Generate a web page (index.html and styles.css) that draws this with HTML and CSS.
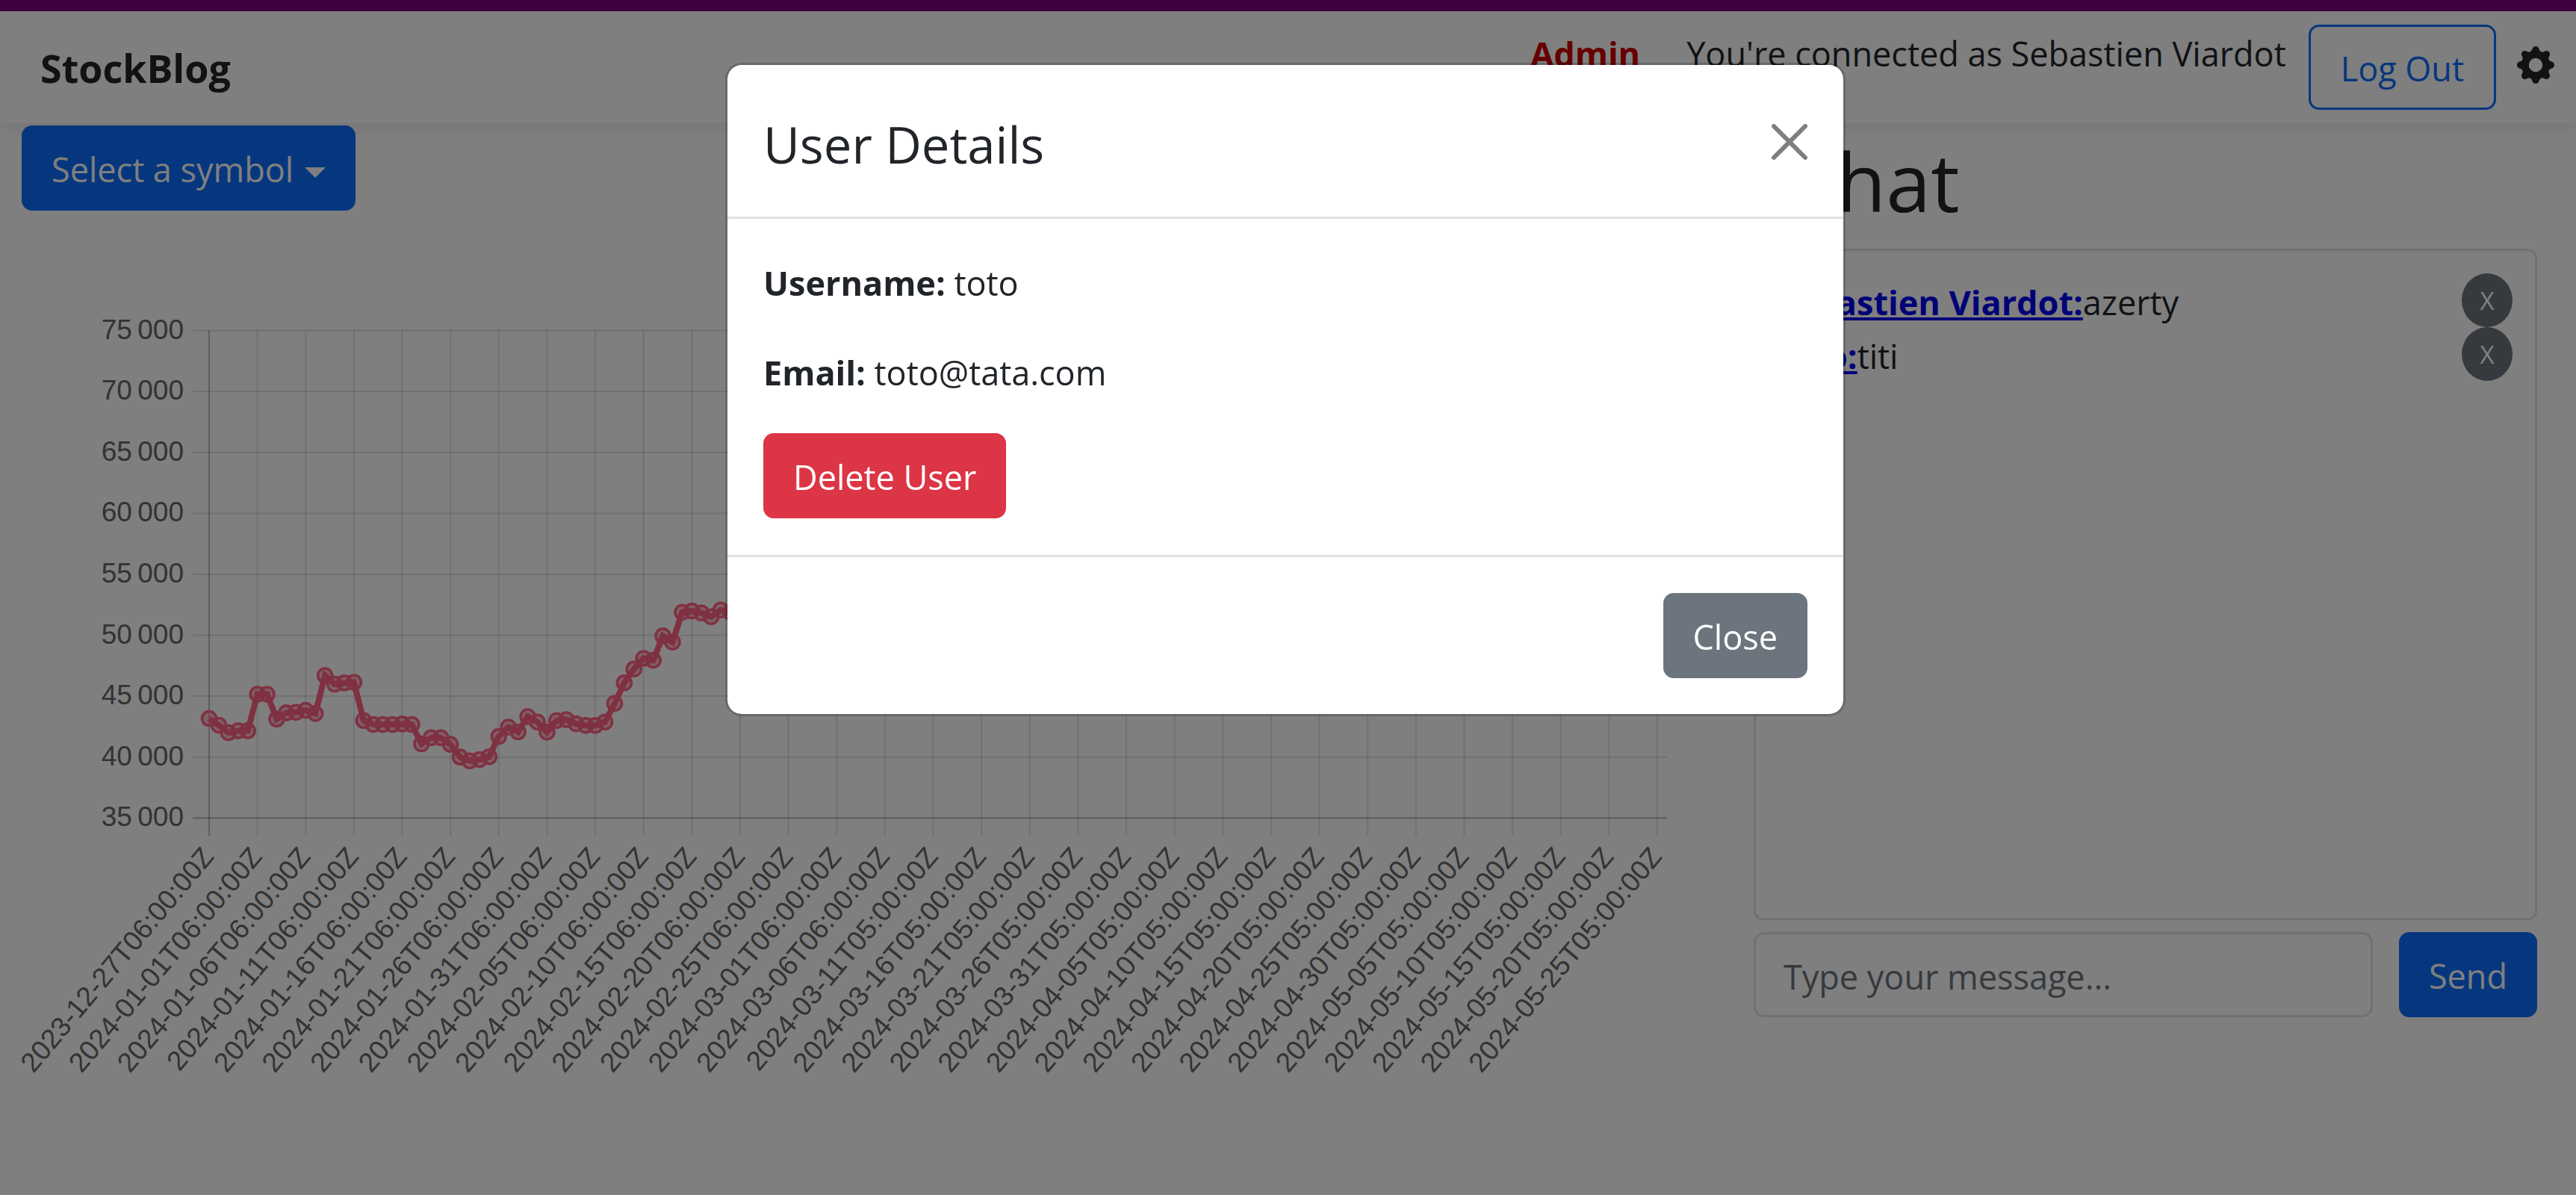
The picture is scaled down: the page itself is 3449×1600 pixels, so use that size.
FILE: index.html
```html
<!DOCTYPE html>
<html>
<head>
    <meta charset="utf-8">
    <title>StockBlog</title>
    <link rel="stylesheet" href="styles.css">
</head>
<body>
  <div class="top-strip"></div>
  <nav class="navbar">
    <a class="brand" href="#">StockBlog</a>
    <div class="nav-right">
      <a class="admin-link" href="#">Admin</a>
      <span class="connected">You're connected as Sebastien Viardot</span>
      <button class="btn btn-outline" type="button">Log Out</button>
      <svg class="gear" viewBox="0 0 16 16" aria-hidden="true">
        <path fill-rule="evenodd" d="M9.405 1.05c-.413-1.4-2.397-1.4-2.81 0l-.1.34a1.464 1.464 0 0 1-2.105.872l-.31-.17c-1.283-.698-2.686.705-1.987 1.987l.169.311c.446.82.023 1.841-.872 2.105l-.34.1c-1.4.413-1.4 2.397 0 2.81l.34.1a1.464 1.464 0 0 1 .872 2.105l-.17.31c-.698 1.283.705 2.686 1.987 1.987l.311-.169a1.464 1.464 0 0 1 2.105.872l.1.34c.413 1.4 2.397 1.4 2.81 0l.1-.34a1.464 1.464 0 0 1 2.105-.872l.31.17c1.283.698 2.686-.705 1.987-1.987l-.169-.311a1.464 1.464 0 0 1 .872-2.105l.34-.1c1.4-.413 1.4-2.397 0-2.81l-.34-.1a1.464 1.464 0 0 1-.872-2.105l.17-.31c.698-1.283-.705-2.686-1.987-1.987l-.311.169a1.464 1.464 0 0 1-2.105-.872l-.1-.34zM8 10.93a2.929 2.929 0 1 1 0-5.86 2.929 2.929 0 0 1 0 5.858z"/>
      </svg>
    </div>
  </nav>

  <main class="page">
    <section class="left-col">
      <button class="btn btn-primary dropdown-toggle" type="button">Select a symbol</button>
      <svg id="chart" class="chart" width="2300" height="1200" viewBox="0 0 2300 1200"></svg>
    </section>

    <section class="chat">
      <h1 class="chat-title">Chat</h1>
      <div class="chat-box">
        <div class="message">
          <p><a class="author" href="#">Sebastien Viardot:</a>azerty</p>
          <button class="btn-delete" type="button">X</button>
        </div>
        <div class="message">
          <p><a class="author" href="#">toto:</a>titi</p>
          <button class="btn-delete" type="button">X</button>
        </div>
      </div>
      <form class="chat-form" onsubmit="return false;">
        <input class="chat-input" type="text" placeholder="Type your message...">
        <button class="btn btn-primary" type="submit">Send</button>
      </form>
    </section>
  </main>

  <div class="backdrop"></div>
  <div class="modal">
    <div class="modal-content">
      <div class="modal-header">
        <h5 class="modal-title">User Details</h5>
        <button class="btn-close" type="button" aria-label="Close">
          <svg viewBox="0 0 16 16" aria-hidden="true">
            <path d="M.293.293a1 1 0 0 1 1.414 0L8 6.586 14.293.293a1 1 0 1 1 1.414 1.414L9.414 8l6.293 6.293a1 1 0 0 1-1.414 1.414L8 9.414l-6.293 6.293a1 1 0 0 1-1.414-1.414L6.586 8 .293 1.707a1 1 0 0 1 0-1.414z"/>
          </svg>
        </button>
      </div>
      <div class="modal-body">
        <p><strong>Username:</strong> toto</p>
        <p><strong>Email:</strong> toto@tata.com</p>
        <button class="btn btn-danger" type="button">Delete User</button>
      </div>
      <div class="modal-footer">
        <button class="btn btn-secondary" type="button">Close</button>
      </div>
    </div>
  </div>

  <script src="chart.js"></script>
</body>
</html>
```

FILE: styles.css
```css
* {
    box-sizing: border-box;
}

body {
    margin: 0;
    background-color: #fff;
    color: #212529;
    font-family: "Open Sans", "Noto Sans", sans-serif;
    font-size: 45px;
    line-height: 66px;
}

p {
    margin: 0;
}

.top-strip {
    height: 15px;
    background-color: #800080;
}

/* navbar */
.navbar {
    display: flex;
    justify-content: space-between;
    height: 150px;
    padding: 18px 29px 0 54px;
    box-shadow: 0 6px 22px rgba(0, 0, 0, 0.09);
}

.brand {
    margin-top: 25px;
    color: #212529;
    font-size: 52px;
    font-weight: 700;
    text-decoration: none;
}

.nav-right {
    display: flex;
    align-items: flex-start;
}

.admin-link {
    margin: 6px 62px 0 0;
    color: #c00;
    font-weight: 700;
    text-decoration: none;
}

.connected {
    margin: 6px 30px 0 0;
}

.gear {
    width: 50px;
    height: 50px;
    margin: 29px 0 0 28px;
    fill: #212529;
}

/* buttons */
.btn {
    height: 114px;
    padding: 4px 37px 0;
    border: 3px solid transparent;
    border-radius: 14px;
    font-family: inherit;
    font-size: 45px;
    line-height: 66px;
}

.btn-primary {
    background-color: #0d6efd;
    color: #fff;
}

.btn-outline {
    padding: 4px 40px 0;
    background-color: transparent;
    border-color: #0d6efd;
    color: #0d6efd;
}

.btn-danger {
    margin-top: 48px;
    background-color: #dc3545;
    color: #fff;
}

.btn-secondary {
    background-color: #6c757d;
    color: #fff;
}

.dropdown-toggle::after {
    content: "";
    display: inline-block;
    margin-left: 15px;
    vertical-align: 6px;
    border-top: 14px solid #fff;
    border-left: 14px solid transparent;
    border-right: 14px solid transparent;
}

/* main columns */
.page {
    display: flex;
    justify-content: space-between;
    padding: 3px 52px 0 29px;
}

.left-col {
    width: 2300px;
}

.chart {
    display: block;
    margin-left: -29px;
}

.chart text {
    font-family: "Liberation Sans", Arial, sans-serif;
    font-size: 37px;
    fill: #666;
}

.chat {
    width: 1049px;
}

.chat-title {
    height: 149px;
    margin: 0 0 16px;
    padding-left: 43px;
    font-size: 108px;
    font-weight: 400;
    line-height: 149px;
}

.chat-box {
    height: 899px;
    padding: 30px 30px 0 28px;
    border: 3px solid #dee2e6;
    border-radius: 12px;
}

.message {
    display: flex;
    justify-content: space-between;
}

.message p {
    padding-top: 6px;
    line-height: 66px;
}

.author {
    color: #0000ee;
    font-weight: 700;
}

.btn-delete {
    flex: none;
    width: 68px;
    height: 72px;
    padding: 0;
    border: 0;
    border-radius: 50%;
    background-color: #6c757d;
    color: #fff;
    font-family: inherit;
    font-size: 33px;
}

.chat-form {
    display: flex;
    justify-content: space-between;
    margin-top: 16px;
}

.chat-input {
    width: 829px;
    height: 114px;
    padding: 4px 37px 0;
    border: 3px solid #dee2e6;
    border-radius: 14px;
    color: #212529;
    font-family: inherit;
    font-size: 45px;
}

.chat-input::placeholder {
    color: #6c757d;
    opacity: 1;
}

/* modal, sits over everything else */
.backdrop {
    position: fixed;
    top: 0;
    left: 0;
    width: 100%;
    height: 100%;
    background-color: rgba(0, 0, 0, 0.5);
    z-index: 10;
}

.modal {
    position: fixed;
    top: 0;
    left: 0;
    width: 100%;
    height: 100%;
    display: flex;
    justify-content: center;
    align-items: flex-start;
    padding-top: 84px;
    padding-right: 7px;
    z-index: 20;
}

.modal-content {
    width: 1500px;
    height: 875px;
    display: flex;
    flex-direction: column;
    background-color: #fff;
    border: 3px solid rgba(0, 0, 0, 0.175);
    background-clip: padding-box;
    border-radius: 22px;
}

.modal-header {
    display: flex;
    justify-content: space-between;
    align-items: center;
    height: 207px;
    padding: 0 48px;
    border-bottom: 3px solid #dee2e6;
}

.modal-title {
    margin: 10px 0 0;
    font-size: 67px;
    font-weight: 400;
    line-height: 1.2;
}

.btn-close {
    width: 48px;
    height: 48px;
    margin-top: 3px;
    padding: 0;
    border: 0;
    background: transparent;
    opacity: 0.5;
}

.btn-close svg {
    display: block;
    width: 100%;
    height: 100%;
}

.modal-body {
    height: 452px;
    padding: 53px 48px 0;
}

.modal-body p + p {
    margin-top: 54px;
}

.modal-footer {
    display: flex;
    justify-content: flex-end;
    padding: 48px;
    border-top: 3px solid #dee2e6;
}
```

FILE: chart.js
```js
// chart drawn by hand, no chart library available
var svgNS = "http://www.w3.org/2000/svg";
var chart = document.getElementById("chart");

// svg origin is at page y = 282
var originY = 282;
var plot = { left: 280, right: 2232, top: 442 - originY, bottom: 1095.4 - originY, tickStart: 258, tickEnd: 1119 - originY };
var step = 64.63;
var pointStep = step / 5;
var pxPer5000 = 81.6;

var dates = [
    "2023-12-27T06", "2024-01-01T06", "2024-01-06T06", "2024-01-11T06", "2024-01-16T06", "2024-01-21T06",
    "2024-01-26T06", "2024-01-31T06", "2024-02-05T06", "2024-02-10T06", "2024-02-15T06", "2024-02-20T06",
    "2024-02-25T06", "2024-03-01T06", "2024-03-06T06", "2024-03-11T05", "2024-03-16T05", "2024-03-21T05",
    "2024-03-26T05", "2024-03-31T05", "2024-04-05T05", "2024-04-10T05", "2024-04-15T05", "2024-04-20T05",
    "2024-04-25T05", "2024-04-30T05", "2024-05-05T05", "2024-05-10T05", "2024-05-15T05", "2024-05-20T05",
    "2024-05-25T05"
];

var prices = [
    43170, 42620, 42010, 42170, 42170, 45170, 45170, 43130, 43640, 43680, 43840, 43580,
    46700, 45990, 46090, 46150, 43010, 42680, 42680, 42680, 42720, 42680, 41090, 41600,
    41600, 41050, 40010, 39700, 39800, 40030, 41700, 42470, 42070, 43330, 42880, 42050,
    43010, 43080, 42740, 42600, 42600, 42880, 44410, 46100, 47230, 48110, 47950, 49950,
    49440, 51890, 51990, 51830, 51520, 52070, 51890
];

function add(tag, attrs, text) {
    var el = document.createElementNS(svgNS, tag);
    for (var key in attrs) {
        el.setAttribute(key, attrs[key]);
    }
    if (text) {
        el.textContent = text;
    }
    chart.appendChild(el);
    return el;
}

function priceToY(price) {
    return plot.bottom - (price - 35000) / 5000 * pxPer5000;
}

// horizontal grid and y labels
for (var p = 35000; p <= 75000; p += 5000) {
    var y = priceToY(p);
    add("line", { x1: plot.tickStart, x2: plot.right, y1: y, y2: y, stroke: p === 35000 ? "rgba(0,0,0,0.25)" : "rgba(0,0,0,0.1)", "stroke-width": 2.2 });
    var label = Math.floor(p / 1000) + "\u202f000";
    add("text", { x: 246, y: y + 11, "text-anchor": "end" }, label);
}

// vertical grid and rotated date labels
for (var i = 0; i < dates.length; i++) {
    var x = plot.left + i * step;
    add("line", { x1: x, x2: x, y1: plot.top, y2: plot.tickEnd, stroke: i === 0 ? "rgba(0,0,0,0.25)" : "rgba(0,0,0,0.1)", "stroke-width": 2.2 });
    var ax = x + 8;
    var ay = plot.tickEnd + 29;
    add("text", { x: ax, y: ay, "text-anchor": "end", transform: "rotate(-50 " + ax + " " + ay + ")" }, dates[i] + ":00:00Z");
}

// points first, the price line stays solid on top of them
var points = [];
for (var k = 0; k < prices.length; k++) {
    var cx = plot.left + k * pointStep;
    var cy = priceToY(prices[k]);
    add("circle", { cx: cx, cy: cy, r: 9.5, fill: "rgba(255,99,132,0.4)", stroke: "#ff6384", "stroke-width": 3.6 });
    points.push(cx + "," + cy);
}
add("polyline", { points: points.join(" "), fill: "none", stroke: "#ff6384", "stroke-width": 8 });
```
